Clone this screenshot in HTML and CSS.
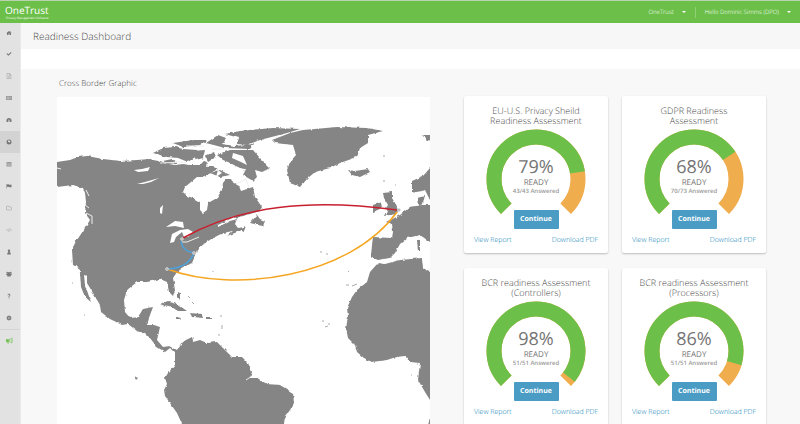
FILE: index.html
```html
<!DOCTYPE html>
<html lang="en">
<head>
<meta charset="utf-8">
<meta name="viewport" content="width=device-width, initial-scale=1">
<title>OneTrust – Readiness Dashboard</title>
<link rel="stylesheet" href="styles.css">
</head>
<body>
<header class="topbar">
  <a class="brand" href="#"><span class="brand-name">OneTrust</span><span class="brand-tag">Privacy Management Software</span></a>
  <div class="account">
    <button class="menu" type="button">OneTrust <span class="caret"></span></button>
    <button class="menu menu-user" type="button">Hello Dominic Simms (DPO) <span class="caret"></span></button>
  </div>
</header>
<div class="shell">
  <nav class="sidebar" aria-label="Main">
    <a href="#" aria-label="Home"><svg viewBox="0 0 12 12"><path d="M1 6 6 2l5 4-1 .6V10H7V7H5v3H2V6.600zM8.500 2H10v2z"/></svg></a>
    <a href="#" aria-label="Tasks"><svg viewBox="0 0 12 12"><path d="m1 6 1.700-1.700L5 6.500 9.500 2 11 3.600 5 9.700z"/></svg></a>
    <a class="soft" href="#" aria-label="Documents"><svg viewBox="0 0 12 12"><path class="line" d="M2 1h5l3 3v7H2zM7 1v3h3M4 6h4M4 8.500h4"/></svg></a>
    <a class="mid" href="#" aria-label="Inventory"><svg viewBox="0 0 12 12"><path d="M0 2h12v8H0z"/><path class="cut" d="M1 4.500h10M1 7.200h10M4 3v7"/></svg></a>
    <a href="#" aria-label="Dashboards"><svg viewBox="0 0 12 12"><path d="M1 10V7a5 5 0 0 1 10 0v3H7.500L6.600 5H5.400l-.9 5z"/></svg></a>
    <a class="active" href="#" aria-label="Readiness"><svg viewBox="0 0 12 12"><circle cx="6" cy="6" r="5"/><path class="hole" d="m4 3 3-.5L6.500 4 9 5 7.500 7.500 6 6 4 6z"/></svg></a>
    <a class="mid" href="#" aria-label="Tables"><svg viewBox="0 0 12 12"><path d="M1 2h10v9H1z"/><path class="cut" d="M2 4.500h8M2 7h8M2 9.300h8"/></svg></a>
    <a href="#" aria-label="Flags"><svg viewBox="0 0 12 12"><path d="M1 2h1v1q2-1 4 0t5 0v5q-3 1-5 0T2 8v3H1z"/></svg></a>
    <a class="soft" href="#" aria-label="Folders"><svg viewBox="0 0 12 12"><path class="line" d="M1 3.500V9q0 1 1 1h8q1 0 1-1V5q0-1-1-1H6L5 2H2Q1 2 1 3.500z"/></svg></a>
    <a class="soft" href="#" aria-label="Scripts"><svg viewBox="0 0 12 12"><path class="line" d="M3.500 3.500 1 6l2.500 2.500M8.500 3.500 11 6 8.500 8.500M6.800 2.500l-1.600 7"/></svg></a>
    <a href="#" aria-label="User"><svg viewBox="0 0 12 12"><circle cx="6" cy="3.500" r="2.500"/><path d="M2.500 11V9L4.500 6h3l2 3v2z"/></svg></a>
    <a href="#" aria-label="Groups"><svg viewBox="0 0 12 12"><circle cx="6" cy="4.500" r="2.400"/><circle cx="2.400" cy="3" r="1.600"/><circle cx="9.600" cy="3" r="1.600"/><path d="M.5 5h11v3l-2 .5V11h-7V8.500L.5 8z"/></svg></a>
    <a href="#" aria-label="Help"><svg viewBox="0 0 12 12"><path class="line bold" d="M4 4.200Q4 2.200 6 2.200t2 1.800Q8 5.200 6 6v1.800M6 9.200v1.600"/></svg></a>
    <a href="#" aria-label="Settings"><svg viewBox="0 0 12 12"><circle cx="6" cy="6" r="4"/><path class="line bold" d="M6 1v10M1 6h10M2.600 2.600l6.800 6.800M9.400 2.600 2.600 9.400"/><circle class="hole" cx="6" cy="6" r="1.500"/></svg></a>
    <a class="news" href="#" aria-label="Announcements"><svg viewBox="0 0 12 12"><path d="M0 4h5v4H4l1 3H2.800L2 8H0z"/><path class="line" d="M6 4q3 0 4-2.500v9Q9 8 6 8zM11.500 4.500v3"/></svg></a>
  </nav>
  <main class="page">
    <h1 class="page-title">Readiness Dashboard</h1>
    <div class="toolbar"></div>
    <div class="content">
      <section class="map-panel">
        <h2 class="map-title">Cross Border Graphic</h2>
        <svg class="map" viewBox="57 97 373 327" role="img" aria-label="Map of cross border data transfers">
          <defs>
            <filter id="coast" x="-5%" y="-5%" width="110%" height="110%">
              <feTurbulence type="fractalNoise" baseFrequency=".2" numOctaves="2" seed="4" result="n"/>
              <feDisplacementMap in="SourceGraphic" in2="n" scale="3" xChannelSelector="R" yChannelSelector="G"/>
            </filter>
          </defs>
          <g class="land" filter="url(#coast)">
            <!-- North, Central and South America -->
            <path d="M50 163 57 162 70 160 78 157 87 156 103 159 120 161 137 160 150 159 157 161 163 163 175 165 183 164 190 165 200 165 204 161 207 162 206 167 213 166 219 168 211 173 202 177 197 177 185 187 183 192 187 196 193 198 200 202 200 210 203 213 207 210 208 203 217 198 222 190 223 183 226 179 232 179 234 183 239 186 241 191 247 189 253 187 255 197 262 207 260 211 250 214 240 217 232 218 218 225 218 227 230 221 237 219 235 224 238 228 245 227 240 231 227 236 233 231 223 233 213 238 205 243 197 250 195 256 192 263 184 267 177 272 173 278 175 290 173 296 169 292 167 282 160 279 152 281 147 282 137 282 127 290 124 300 125 312 130 318 138 317 143 309 153 307 150 315 147 325 154 325 160 327 157 340 163 347 170 346 177 350 182 342 192 337 193 342 200 340 207 343 217 342 223 348 232 357 242 357 248 363 252 372 250 378 257 378 267 384 280 385 293 393 294 403 290 410 285 417 283 430H183L182 424 177 413 165 396 164 390 167 384 165 378 168 373 175 365 175 353 170 348 165 352 157 347 150 338 145 333 137 331 128 324 122 325 110 319 101 312 100 305 93 293 87 283 87 276 84 275 85 285 91 302 85 297 81 287 80 273 79 268 73 265 72 250 75 243 87 225 90 220 85 213 86 202 85 193 83 188 73 185 57 187 50 188z"/>
            <!-- Arctic archipelago -->
            <path d="M153 153 163 148 175 147 183 149 197 150 198 155 188 162 178 158 167 157zM173 143 193 140 207 140 200 145 183 147zM192 151 205 150 203 158 196 160zM206 143 218 135 226 138 222 144 235 146 254 144 250 149 225 148zM225 134 240 131 250 130 273 128 300 129 287 133 260 140 247 145 237 144 239 138zM217 155 230 150 253 150 260 158 270 168 262 172 255 170 257 177 253 181 243 175 246 169 240 168 228 162 223 160zM210 173 220 170 230 175 220 177zM205 156 214 152 216 157 208 162zM163 161 172 159 177 163 168 164z"/>
            <path d="M272 140 290 133 303 130 337 127 367 128 383 131 368 135 368 143 360 148 357 157 340 163 330 168 315 172 308 178 300 187 290 183 287 170 290 162 296 155 293 145 275 143z"/>
            <path d="M348 170 355 171 368 169 370 172 360 177 352 175zM250 223 257 215 260 219 265 221 263 226zM240 229 246 226 244 231z"/>
            <!-- Europe -->
            <path d="M383 193 392 192 392 198 395 203 398 210 397 214 383 216 388 212 386 208 388 205 384 198zM373 205 381 202 382 208 373 212zM440 205H422L410 207 400 215 387 222 392 224 393 232 392 238 373 237 372 245 371 257 378 260 390 258 395 253 400 244 407 238 420 235 430 242 440 250zM418 206 417 197 425 195 423 204zM440 160 430 168 423 176 412 181 412 191 417 192 425 190 430 200 440 200zM423 135H436V142L428 140zM417 240H420V251H418z"/>
            <!-- Africa -->
            <path d="M378 263 385 264 400 260 422 258 423 268 430 272 440 274V410L430 400 425 392 418 380 420 363 410 362 405 356 396 357 387 360 372 362 364 358 357 352 355 345 348 338 346 328 348 317 347 308 352 297 357 290 367 282 370 272zM427 430 430 417 440 410V430z"/>
            <!-- Caribbean -->
            <path d="M160 305 168 302 177 304 187 311 178 311 170 306zM190 313 202 314 203 318 192 317zM176 317 181 318 180 319 176 319zM206 317H211V319H206zM178 292 180 293 180 300 178 297zM134 376 138 378 136 380z"/>
          </g>
          <path class="islets" d="M346 285h3M352 286l5-2M322 321h2M325 327l3-1M329 323v2M221 315v2M222 325v4M219 334v2M188 296l2 2M192 302l2 2M213 271v1M348 271l1 1M320 252h2M326 254h2M383 156h2M383 181h2M395 185h1M411 375h1M417 364h1M72 283h1M84 315h1"/>
          <g class="water">
            <path d="M166 227 175 221 183 222 184 228 175 226zM170 243 172 234 180 230 188 229 193 232 188 237 184 237 182 232 176 237 174 242zM134 170 142 169 150 167 148 171 138 172zM137 184 145 182 159 178 151 182 143 184zM160 208 163 205 162 214 160 213zM233 153 243 156 247 165 241 162 232 158zM207 176 212 182 209 183 207 180zM218 170 222 173 216 177z"/>
            <path class="stream" d="M182 242 187 242 199 237M86 190 89 196M85 205 89 208M86 213 92 216 92 224M160 163 186 162M186 146 204 146M212 149 224 149M236 184 246 179 249 188M57 168 61 169M252 376 246 380"/>
          </g>
          <g class="routes">
            <path class="red" d="M183 238C240 206 310 198 397 210"/>
            <path class="orange" d="M167 269C235 294 350 277 397 212"/>
            <path class="blue" d="M181 241Q182 251 193 252.500M194 253Q188 268 168 269"/>
            <circle cx="182" cy="239" r="1.300"/><circle cx="194" cy="253" r="1.300"/><circle cx="167" cy="269" r="1.300"/><circle cx="399" cy="210" r="1.300"/>
          </g>
        </svg>
      </section>
      <section class="cards" aria-label="Assessments">
        <article class="card">
          <h3>EU-U.S. Privacy Sheild<br>Readiness Assessment</h3>
          <div class="gauge">
            <svg viewBox="0 0 100 86"><path class="rest" d="M20.300 79.700A42 42 0 1 1 79.700 79.700"/><path class="done" pathLength="100" stroke-dasharray="80 200" d="M20.300 79.700A42 42 0 1 1 79.700 79.700"/></svg>
            <div class="reading"><strong>79%</strong><span>READY</span><small>43/43 Answered</small></div>
          </div>
          <button class="go" type="button">Continue</button>
          <div class="links"><a href="#">View Report</a><a href="#">Download PDF</a></div>
        </article>
        <article class="card">
          <h3>GDPR Readiness<br>Assessment</h3>
          <div class="gauge">
            <svg viewBox="0 0 100 86"><path class="rest" d="M20.300 79.700A42 42 0 1 1 79.700 79.700"/><path class="done" pathLength="100" stroke-dasharray="71 200" d="M20.300 79.700A42 42 0 1 1 79.700 79.700"/></svg>
            <div class="reading"><strong>68%</strong><span>READY</span><small>70/73 Answered</small></div>
          </div>
          <button class="go" type="button">Continue</button>
          <div class="links"><a href="#">View Report</a><a href="#">Download PDF</a></div>
        </article>
        <article class="card">
          <h3>BCR readiness Assessment<br>(Controllers)</h3>
          <div class="gauge">
            <svg viewBox="0 0 100 86"><path class="rest" d="M20.300 79.700A42 42 0 1 1 79.700 79.700"/><path class="done" pathLength="100" stroke-dasharray="97.500 200" d="M20.300 79.700A42 42 0 1 1 79.700 79.700"/></svg>
            <div class="reading"><strong>98%</strong><span>READY</span><small>51/51 Answered</small></div>
          </div>
          <button class="go" type="button">Continue</button>
          <div class="links"><a href="#">View Report</a><a href="#">Download PDF</a></div>
        </article>
        <article class="card">
          <h3>BCR readiness Assessment<br>(Processors)</h3>
          <div class="gauge">
            <svg viewBox="0 0 100 86"><path class="rest" d="M20.300 79.700A42 42 0 1 1 79.700 79.700"/><path class="done" pathLength="100" stroke-dasharray="89.500 200" d="M20.300 79.700A42 42 0 1 1 79.700 79.700"/></svg>
            <div class="reading"><strong>86%</strong><span>READY</span><small>51/51 Answered</small></div>
          </div>
          <button class="go" type="button">Continue</button>
          <div class="links"><a href="#">View Report</a><a href="#">Download PDF</a></div>
        </article>
      </section>
    </div>
  </main>
</div>
</body>
</html>
```
FILE: styles.css
```css
* { box-sizing: border-box; margin: 0; padding: 0; }

body {
  display: flex;
  flex-direction: column;
  height: 100vh;
  overflow: hidden;
  background: #f8f8f8;
  color: #484848;
  font-family: "Open Sans", "Noto Sans", sans-serif;
  font-weight: 300;
  text-rendering: geometricPrecision;
}

a { text-decoration: none; }
button { border: 0; font: inherit; text-rendering: inherit; cursor: pointer; }

.topbar {
  display: flex;
  justify-content: space-between;
  align-items: center;
  flex: none;
  height: 23px;
  padding: 0 9px 0 5px;
  border-top: 1px solid #b9d3ae;
  background: #6cc04a;
  color: #fff;
}
.brand { display: flex; flex-direction: column; color: #fff; font-weight: 400; }
.brand-name { font-size: 10px; line-height: 12px; }
.brand-tag { padding-left: 1px; font-size: 3px; line-height: 5px; }
.account { display: flex; align-items: center; }
.menu {
  display: flex;
  align-items: center;
  gap: 8px;
  padding: 0 9px;
  background: none;
  color: #fff;
  font-size: 6px;
  line-height: 11px;
}
.menu-user { padding-right: 0; border-left: 1px solid #8fd075; }
.caret { border: 2px solid transparent; border-top-color: #fff; border-bottom: 0; }

.shell { display: flex; flex: 1; min-height: 0; }
.sidebar { flex: none; width: 21px; border-right: 1px solid #eaeaea; background: #e2e2e2; overflow: hidden; }
.sidebar a {
  display: flex;
  align-items: center;
  height: 22px;
  padding-left: 6px;
  color: #787878;
}
.sidebar a:first-child { height: 20px; }
.sidebar svg { width: 6px; height: 6px; fill: currentColor; }
.sidebar .mid { color: #969696; }
.sidebar .soft { color: #999; }
.sidebar .active { background: #d3d3d3; }
.sidebar .news { border-top: 1px solid #d4d4d4; color: #6cc04a; }
.sidebar .news svg { width: 7px; height: 7px; }
.line { fill: none; stroke: currentColor; stroke-width: 1; }
.bold { stroke-width: 2; }
.cut { fill: none; stroke: #ccc; stroke-width: 1; }
.hole { fill: #e2e2e2; }

.page { flex: 1; min-width: 0; overflow: hidden; }
.page-title { padding: 0 12px; font-size: 10px; font-weight: 300; line-height: 26px; background: #f7f7f7; }
.toolbar { height: 20px; background: #fff; }
.content {
  display: flex;
  align-items: flex-start;
  gap: 34px;
  padding: 0 34px 14px 36px;
}
.map-panel { flex: 1; min-width: 0; }
.map-title { padding: 2px 0 0 2px; font-size: 8px; font-weight: 300; line-height: 26px; }
.map { display: block; width: 100%; background: #fff; }
.land { fill: #858585; }
.islets { fill: none; stroke: #aaa; stroke-width: 1; }
.water { fill: #fff; }
.stream { fill: none; stroke: #eee; stroke-width: 1; }
.routes path { fill: none; stroke-width: 1.5; }
.routes .red { stroke: #c8202f; }
.routes .orange { stroke: #f5a623; }
.routes .blue { stroke: #4aa3df; }
.routes circle { fill: #999; stroke: #ddd; stroke-width: 1; }

.cards {
  display: grid;
  grid-template-columns: repeat(2, 144px);
  gap: 15px 14px;
  padding-top: 27px;
}
.card {
  display: flex;
  flex-direction: column;
  align-items: center;
  height: 157px;
  padding: 10px 10px 0;
  border-radius: 2px;
  background: #fff;
  box-shadow: 0 1px 2px rgba(0, 0, 0, .24);
}
.card h3 { font-size: 9px; font-weight: 300; line-height: 10px; text-align: center; white-space: nowrap; }
.gauge { display: grid; width: 100px; margin-top: 3px; }
.gauge > * { grid-area: 1 / 1; }
.gauge svg { display: block; width: 100%; }
.gauge path { fill: none; stroke-width: 15; }
.rest { stroke: #f0ad4e; }
.done { stroke: #6cc04a; }
.reading { display: flex; flex-direction: column; align-items: center; padding-top: 28px; color: #747474; font-weight: 400; }
.reading strong { font-size: 18px; font-weight: 400; line-height: 21px; }
.reading span { font-size: 8px; line-height: 9px; }
.reading small { font-size: 6px; font-weight: 600; line-height: 9px; color: #999; }
.go {
  flex: none;
  width: 45px;
  height: 19px;
  margin-top: -5px;
  border-radius: 1px;
  background: #4b9cc4;
  color: #fff;
  font-size: 7px;
  font-weight: 700;
  line-height: 19px;
}
.links { display: flex; justify-content: space-between; width: 100%; margin-top: 6px; font-size: 7px; line-height: 11px; }
.links a { color: #0a80b4; }
```
